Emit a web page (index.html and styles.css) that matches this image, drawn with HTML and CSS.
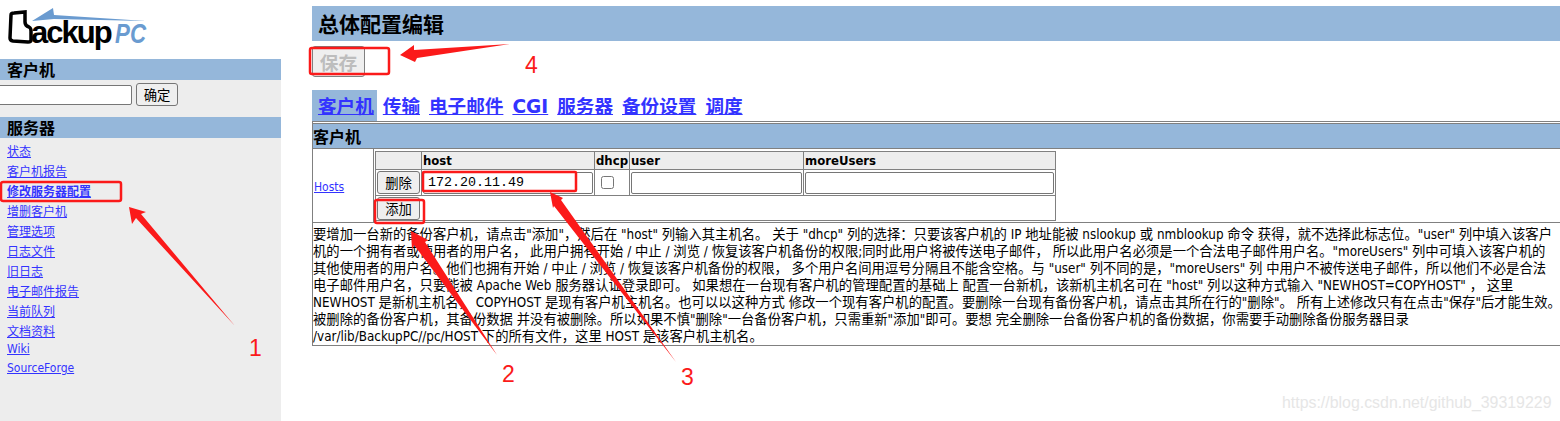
FILE: index.html
```html
<!DOCTYPE html>
<html>
<head>
    <meta charset="utf-8">
    <title>BackupPC</title>
    <link rel="stylesheet" href="styles.css">
</head>
<body>
    <div class="sidebar">
        <div class="logo">
            <svg width="160" height="59" viewBox="0 0 160 59">
                <polygon points="32,21 53,8 54,15 146,21 54,19" fill="#6a9bd0"/>
                <path d="M11,15 Q11,13 14,13 L25,12 L25,22 Q25,26 29,27 Q31,28 31,31 L31,40 Q31,42 28,42 L13,41 Q10,40.5 10,38 Z" fill="none" stroke="#000" stroke-width="3.5"/>
                <text x="31" y="43" class="logo-word">ackup</text>
                <text x="115" y="43" class="logo-pc" textLength="31" lengthAdjust="spacingAndGlyphs">PC</text>
            </svg>
        </div>
        <div class="side-title">客户机</div>
        <div class="side-search">
            <input type="text" class="search-input">
            <button class="btn">确定</button>
        </div>
        <div class="side-title">服务器</div>
        <div class="side-nav">
            <a href="#">状态</a>
            <a href="#">客户机报告</a>
            <a href="#" class="current">修改服务器配置</a>
            <a href="#">增删客户机</a>
            <a href="#">管理选项</a>
            <a href="#">日志文件</a>
            <a href="#">旧日志</a>
            <a href="#">电子邮件报告</a>
            <a href="#">当前队列</a>
            <a href="#">文档资料</a>
            <a href="#" class="latin">Wiki</a>
            <a href="#" class="latin">SourceForge</a>
        </div>
    </div>

    <div class="main">
        <h1 class="page-title">总体配置编辑</h1>
        <button class="save" disabled>保存</button>
        <div class="tabs">
            <a href="#" class="active">客户机</a>
            <a href="#">传输</a>
            <a href="#">电子邮件</a>
            <a href="#">CGI</a>
            <a href="#">服务器</a>
            <a href="#">备份设置</a>
            <a href="#">调度</a>
        </div>
        <div class="config">
            <div class="config-title">客户机</div>
            <div class="config-row">
                <div class="config-name"><a href="#">Hosts</a></div>
                <div class="config-value">
                    <table class="hosts">
                        <tr class="hosts-head">
                            <th class="col-btn"></th>
                            <th class="col-host">host</th>
                            <th class="col-dhcp">dhcp</th>
                            <th class="col-user">user</th>
                            <th class="col-more">moreUsers</th>
                        </tr>
                        <tr class="hosts-row">
                            <td><button class="btn btn-row">删除</button></td>
                            <td><input type="text" class="cell-input mono" value="172.20.11.49"></td>
                            <td class="center"><input type="checkbox" class="check"></td>
                            <td><input type="text" class="cell-input"></td>
                            <td><input type="text" class="cell-input"></td>
                        </tr>
                        <tr class="hosts-add">
                            <td colspan="5"><button class="btn btn-row">添加</button></td>
                        </tr>
                    </table>
                </div>
            </div>
            <div class="config-help">
                要增加一台新的备份客户机，请点击"添加"，然后在 "host" 列输入其主机名。 关于 "dhcp" 列的选择：只要该客户机的 IP 地址能被 nslookup 或 nmblookup 命令 获得，就不选择此标志位。"user" 列中填入该客户<br>
                机的一个拥有者或使用者的用户名， 此用户拥有开始 / 中止 / 浏览 / 恢复该客户机备份的权限;同时此用户将被传送电子邮件， 所以此用户名必须是一个合法电子邮件用户名。"moreUsers" 列中可填入该客户机的<br>
                其他使用者的用户名。他们也拥有开始 / 中止 / 浏览 / 恢复该客户机备份的权限， 多个用户名间用逗号分隔且不能含空格。与 "user" 列不同的是，"moreUsers" 列 中用户不被传送电子邮件，所以他们不必是合法<br>
                电子邮件用户名，只要能被 Apache Web 服务器认证登录即可。 如果想在一台现有客户机的管理配置的基础上 配置一台新机，该新机主机名可在 "host" 列以这种方式输入 "NEWHOST=COPYHOST" ， 这里<br>
                NEWHOST 是新机主机名， COPYHOST 是现有客户机主机名。也可以以这种方式 修改一个现有客户机的配置。要删除一台现有备份客户机，请点击其所在行的"删除"。 所有上述修改只有在点击"保存"后才能生效。<br>
                被删除的备份客户机，其备份数据 并没有被删除。所以如果不慎"删除"一台备份客户机，只需重新"添加"即可。要想 完全删除一台备份客户机的备份数据，你需要手动删除备份服务器目录<br>
                /var/lib/BackupPC//pc/HOST 下的所有文件，这里 HOST 是该客户机主机名。
            </div>
        </div>
    </div>

    <!-- red notes drawn on top of the screenshot -->
    <svg class="notes" width="1560" height="421" viewBox="0 0 1560 421">
        <g fill="none" stroke="#fb1a1a" stroke-width="2.5">
            <rect x="1" y="182" width="120" height="19" rx="2"/>
            <rect x="310" y="48" width="79" height="26" rx="2"/>
            <rect x="423" y="172" width="153" height="19" rx="1"/>
            <rect x="375" y="200" width="49" height="23" rx="2"/>
        </g>
        <g fill="#fb1a1a">
            <polygon points="129,207 146,212 141,214 235,326 136,218 132,224"/>
            <polygon points="400,55 414,45 414,50 510,44 417,58 415,62"/>
            <polygon points="411,231 428,240 425,242 497,355 414,245 412,250"/>
            <polygon points="550,192 563,198 561,200 676,362 554,206 553,208"/>
        </g>
        <g class="note-num">
            <text x="249" y="356">1</text>
            <text x="502" y="382">2</text>
            <text x="681" y="385">3</text>
            <text x="525" y="73">4</text>
        </g>
        <text x="1282" y="408" class="watermark">https://blog.csdn.net/github_39319229</text>
    </svg>
</body>
</html>
```
FILE: styles.css
```css
html, body {
    margin: 0;
    padding: 0;
}

body {
    display: flex;
    width: 1560px;
    height: 421px;
    overflow: hidden;
    background-color: #fff;
    color: #000;
    font-family: "DejaVu Sans", "Noto Sans CJK SC", sans-serif;
}

a {
    color: #3333ff;
}

.sidebar {
    width: 281px;
    height: 421px;
    flex-shrink: 0;
    background-color: #ededed;
}

.logo {
    height: 59px;
    background-color: #fff;
}

.logo svg {
    display: block;
}

.logo-word {
    font-family: "Liberation Sans", sans-serif;
    font-weight: bold;
    font-size: 31px;
    letter-spacing: -2px;
    fill: #000;
}

.logo-pc {
    font-family: "Liberation Sans", sans-serif;
    font-style: italic;
    font-weight: bold;
    font-size: 27px;
    fill: #6a9bd0;
}

.side-title {
    height: 21px;
    padding-left: 7px;
    background-color: #95b7da;
    font-size: 16px;
    font-weight: bold;
    line-height: 23px;
}

.side-search {
    display: flex;
    align-items: center;
    gap: 4px;
    height: 25px;
    padding: 2px 0 10px;
}

.search-input {
    width: 140px;
    height: 20px;
    margin-left: -8px;
    padding: 0;
    box-sizing: border-box;
    border: 1px solid #767676;
    border-radius: 2px;
}

.btn {
    height: 23px;
    padding: 0;
    width: 42px;
    border: 1px solid #767676;
    border-radius: 3px;
    background-color: #efefef;
    font-family: "DejaVu Sans", "Noto Sans CJK SC", sans-serif;
    font-size: 13.33px;
}

.side-nav {
    padding: 5px 0 0 7px;
    font-family: "DejaVu Sans Condensed", "DejaVu Sans", "Noto Sans CJK SC", sans-serif;
    font-size: 12px;
}

.side-nav a {
    display: block;
    height: 20px;
    line-height: 18px;
}

.side-nav a.latin {
    height: 19px;
    line-height: 12px;
}

.side-nav a.current {
    font-weight: bold;
}

.main {
    flex: 1;
    margin-left: 31px;
    padding-top: 6px;
}

.page-title {
    height: 35px;
    margin: 0;
    padding-left: 6px;
    background-color: #95b7da;
    font-size: 21px;
    line-height: 39px;
}

.save {
    display: block;
    width: 53px;
    height: 31px;
    margin-top: 5px;
    padding: 0;
    border: 1px solid #808080;
    border-radius: 3px;
    background-color: #efefef;
    color: #bdbdbd;
    font-family: "DejaVu Sans", "Noto Sans CJK SC", sans-serif;
    font-size: 18.7px;
    font-weight: bold;
}

.tabs {
    display: flex;
    gap: 3px;
    height: 31px;
    margin-top: 13px;
    font-size: 18.6px;
    font-weight: bold;
    line-height: 33px;
}

.tabs a {
    padding: 0 3px;
}

.tabs a.active {
    padding-left: 6px;
    background-color: #95b7da;
}

.config {
    height: 225px;
    box-sizing: border-box;
    border-top: 1px solid #808080;
    border-bottom: 1px solid #808080;
    border-left: 1px solid #808080;
}

.config-title {
    height: 24px;
    margin-top: 1px;
    border-top: 1px solid #808080;
    border-bottom: 1px solid #808080;
    background-color: #95b7da;
    font-size: 16px;
    font-weight: bold;
    line-height: 27px;
}

.config-row {
    display: flex;
    height: 73px;
    border-bottom: 1px solid #808080;
}

.config-name {
    display: flex;
    align-items: center;
    width: 59px;
    padding: 2px 0 0 1px;
    border-right: 1px solid #808080;
    font-family: "DejaVu Sans Condensed", "DejaVu Sans", sans-serif;
    font-size: 12px;
}

.config-value {
    padding: 2px 0 0 1px;
}

.hosts {
    width: 681px;
    table-layout: fixed;
    border-collapse: collapse;
    border: 1px solid #808080;
}

.hosts th, .hosts td {
    padding: 0 1px;
    border: 1px solid #808080;
}

.hosts-head {
    height: 18px;
    background-color: #ededed;
    text-align: left;
}

.hosts-head th {
    font-family: "DejaVu Sans Condensed", "DejaVu Sans", sans-serif;
    font-size: 13px;
    line-height: 14px;
}

.col-btn {
    width: 43px;
}

.col-host {
    width: 170px;
}

.col-dhcp {
    width: 32px;
}

.col-user {
    width: 171px;
}

.hosts-row {
    height: 26px;
}

.hosts-add {
    height: 25px;
}

.btn-row {
    display: block;
    width: 43px;
    height: 23px;
}

.cell-input {
    display: block;
    width: 100%;
    height: 22px;
    padding: 0 4px;
    box-sizing: border-box;
    border: 1px solid #767676;
    border-radius: 2px;
}

.mono {
    font-family: "Liberation Mono", monospace;
    font-size: 13.33px;
}

.check {
    display: block;
    width: 13px;
    height: 13px;
    margin: 0 0 0 5px;
}

.config-help {
    padding: 3px 0 0 0;
    font-family: "DejaVu Sans Condensed", "DejaVu Sans", "Noto Sans CJK SC", sans-serif;
    font-size: 13.33px;
    line-height: 17px;
    white-space: nowrap;
}

.notes {
    position: absolute;
    left: 0;
    top: 0;
    pointer-events: none;
}

.note-num {
    font-family: "Liberation Sans", sans-serif;
    font-size: 23px;
    fill: #fb1a1a;
}

.watermark {
    font-family: "Liberation Sans", sans-serif;
    font-size: 15.9px;
    fill: #e6e6e6;
}
```
